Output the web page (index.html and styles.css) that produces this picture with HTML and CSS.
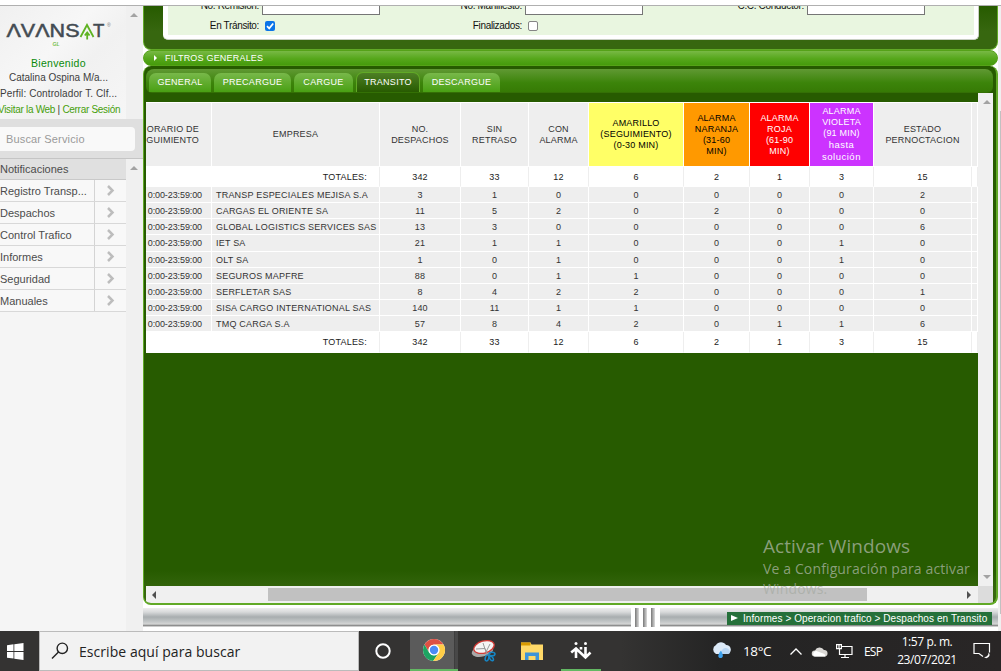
FILE: index.html
```html
<!DOCTYPE html>
<html lang="es">
<head>
<meta charset="utf-8">
<title>Avansat GL - Despachos en Transito</title>
<link rel="stylesheet" href="styles.css">
</head>
<body>
<div class="screen">
  <div class="topline"></div>
  <div class="app">
    <aside class="sidebar">
      <div class="profile">
        <div class="profile-body">
          <svg class="logo" width="126" height="40" viewBox="0 0 126 40">
            <g fill="#434b52" font-family="Liberation Sans, sans-serif" font-size="18.500" stroke="#434b52" stroke-width=".5">
              <text x="6.500" y="26.500" textLength="73" lengthAdjust="spacingAndGlyphs">ΛVΛNS</text>
              <text x="93" y="26.500">T</text>
            </g>
            <path d="M80.500 26.500L87 14.500l6.500 12M87.200 21.500v7.500M84.800 25l2.400-3 2.400 3" fill="none" stroke="#5fb322" stroke-width="1.800"/>
            <text x="107" y="16" font-size="5" fill="#777" font-family="Liberation Sans, sans-serif">®</text>
            <text x="52.500" y="35" font-size="5" font-weight="bold" font-style="italic" fill="#77c04a" font-family="Liberation Sans, sans-serif">GL</text>
          </svg>
          <p class="welcome">Bienvenido</p>
          <p class="person">Catalina Ospina M/a...</p>
          <p class="role">Perfil: Controlador T. Clf...</p>
          <p class="links"><a>Visitar la Web</a> | <a>Cerrar Sesión</a></p>
        </div>
        <div class="side-scroll"><i class="tri up"></i></div>
      </div>
      <div class="search"><div class="search-box">Buscar Servicio</div></div>
      <div class="menu-area">
        <ul class="menu">
          <li class="current"><span>Notificaciones</span></li>
          <li><span>Registro Transp...</span><b><svg width="9" height="11" viewBox="0 0 9 11"><path d="M2 1l4.500 4.500L2 10"/></svg></b></li>
          <li><span>Despachos</span><b><svg width="9" height="11" viewBox="0 0 9 11"><path d="M2 1l4.500 4.500L2 10"/></svg></b></li>
          <li><span>Control Trafico</span><b><svg width="9" height="11" viewBox="0 0 9 11"><path d="M2 1l4.500 4.500L2 10"/></svg></b></li>
          <li><span>Informes</span><b><svg width="9" height="11" viewBox="0 0 9 11"><path d="M2 1l4.500 4.500L2 10"/></svg></b></li>
          <li><span>Seguridad</span><b><svg width="9" height="11" viewBox="0 0 9 11"><path d="M2 1l4.500 4.500L2 10"/></svg></b></li>
          <li><span>Manuales</span><b><svg width="9" height="11" viewBox="0 0 9 11"><path d="M2 1l4.500 4.500L2 10"/></svg></b></li>
        </ul>
        <div class="side-scroll menu-scroll"><i class="tri up"></i></div>
      </div>
    </aside>

    <main class="main">
      <section class="filters">
        <div class="filters-card">
          <div class="filters-fill">
            <div class="frow frow-1">
              <label>No. Remisión:</label><span class="field"></span>
              <label>No. Manifiesto:</label><span class="field"></span>
              <label>C.C. Conductor:</label><span class="field"></span>
            </div>
            <div class="frow frow-2">
              <label>En Tránsito:</label><span class="check on"><svg width="10" height="10" viewBox="0 0 10 10"><path d="M2 5.200l2.200 2.200L8.200 2.500" fill="none" stroke="#fff" stroke-width="1.700"/></svg></span>
              <label>Finalizados:</label><span class="check"></span>
            </div>
          </div>
        </div>
      </section>
      <div class="general-bar"><i class="tri right"></i>FILTROS GENERALES</div>
      <section class="panel">
        <nav class="tabs">
          <a class="t1">GENERAL</a><a class="t2">PRECARGUE</a><a class="t3">CARGUE</a><a class="t4 active">TRANSITO</a><a class="t5">DESCARGUE</a>
        </nav>
        <div class="viewport">
          <div class="sheet">
            <table class="report">
              <colgroup><col class="c0"><col class="c1"><col class="c2"><col class="c3"><col class="c4"><col class="c5"><col class="c6"><col class="c7"><col class="c8"><col class="c9"><col class="c10"></colgroup>
              <thead>
                <tr><th>ORARIO DE<br>GUIMIENTO</th><th>EMPRESA</th><th>NO.<br>DESPACHOS</th><th>SIN<br>RETRASO</th><th>CON<br>ALARMA</th><th class="yellow">AMARILLO<br>(SEGUIMIENTO)<br>(0-30 MIN)</th><th class="orange">ALARMA<br>NARANJA<br>(31-60<br>MIN)</th><th class="red">ALARMA<br>ROJA<br>(61-90<br>MIN)</th><th class="violet">ALARMA<br>VIOLETA<br>(91 MIN)<br><span class="lower">hasta<br>solución</span></th><th>ESTADO<br>PERNOCTACION</th><th></th></tr>
              </thead>
              <tbody>
                <tr class="total"><td colspan="2">TOTALES:</td><td>342</td><td>33</td><td>12</td><td>6</td><td>2</td><td>1</td><td>3</td><td>15</td><td></td></tr>
                <tr><td>0:00-23:59:00</td><td>TRANSP ESPECIALES MEJISA S.A</td><td>3</td><td>1</td><td>0</td><td>0</td><td>0</td><td>0</td><td>0</td><td>2</td><td></td></tr>
                <tr><td>0:00-23:59:00</td><td>CARGAS EL ORIENTE SA</td><td>11</td><td>5</td><td>2</td><td>0</td><td>2</td><td>0</td><td>0</td><td>0</td><td></td></tr>
                <tr><td>0:00-23:59:00</td><td>GLOBAL LOGISTICS SERVICES SAS</td><td>13</td><td>3</td><td>0</td><td>0</td><td>0</td><td>0</td><td>0</td><td>6</td><td></td></tr>
                <tr class="tall"><td>0:00-23:59:00</td><td>IET SA</td><td>21</td><td>1</td><td>1</td><td>0</td><td>0</td><td>0</td><td>1</td><td>0</td><td></td></tr>
                <tr><td>0:00-23:59:00</td><td>OLT SA</td><td>1</td><td>0</td><td>1</td><td>0</td><td>0</td><td>0</td><td>1</td><td>0</td><td></td></tr>
                <tr><td>0:00-23:59:00</td><td>SEGUROS MAPFRE</td><td>88</td><td>0</td><td>1</td><td>1</td><td>0</td><td>0</td><td>0</td><td>0</td><td></td></tr>
                <tr><td>0:00-23:59:00</td><td>SERFLETAR SAS</td><td>8</td><td>4</td><td>2</td><td>2</td><td>0</td><td>0</td><td>0</td><td>1</td><td></td></tr>
                <tr><td>0:00-23:59:00</td><td>SISA CARGO INTERNATIONAL SAS</td><td>140</td><td>11</td><td>1</td><td>1</td><td>0</td><td>0</td><td>0</td><td>0</td><td></td></tr>
                <tr><td>0:00-23:59:00</td><td>TMQ CARGA S.A</td><td>57</td><td>8</td><td>4</td><td>2</td><td>0</td><td>1</td><td>1</td><td>6</td><td></td></tr>
                <tr class="total last"><td colspan="2">TOTALES:</td><td>342</td><td>33</td><td>12</td><td>6</td><td>2</td><td>1</td><td>3</td><td>15</td><td></td></tr>
              </tbody>
            </table>
          </div>
          <div class="vscroll"><i class="tri up"></i><i class="tri down"></i></div>
          <div class="hscroll"><i class="tri left"></i><span class="thumb"></span><i class="tri right"></i></div>
          <div class="corner"></div>
        </div>
      </section>
      <footer class="metal">
        <span class="slots"><i></i><i></i><i></i></span>
        <div class="crumb"><i class="tri right"></i>Informes &gt; Operacion trafico &gt; Despachos en Transito</div>
      </footer>
    </main>
    <div class="page-scroll"><i></i></div>
  </div>

  <div class="taskbar">
    <div class="start"><svg width="17" height="17" viewBox="0 0 17 17" fill="#fff"><path d="M0 2.300L6.500 1.300V8H0zM7.300 1.200L16.500 0V8H7.300zM0 8.900h6.500v6.700L0 14.700zM7.300 8.900h9.200V17l-9.200-1.300z"/></svg></div>
    <div class="finder"><svg width="18" height="18" viewBox="0 0 18 18" fill="none" stroke="#222" stroke-width="1.400"><circle cx="11.300" cy="6.300" r="5.200"/><path d="M7.500 10L1 16.500"/></svg><span>Escribe aquí para buscar</span></div>
    <div class="slot s1"><svg width="18" height="18" viewBox="0 0 18 18"><circle cx="9" cy="9" r="6.700" fill="none" stroke="#fff" stroke-width="2"/></svg></div>
    <div class="slot s2"><svg width="24" height="24" viewBox="0 0 24 24"><circle cx="12" cy="12" r="11" fill="#fff"/><path d="M2.500 6.500A11 11 0 0 1 21.500 6.500H12A5.500 5.500 0 0 0 7.200 14.800z" fill="#dd5144"/><path d="M2.500 6.500A11 11 0 0 0 11.200 23L16.800 14.700A5.500 5.500 0 0 1 7.200 14.800z" fill="#1da462"/><path d="M21.500 6.500A11 11 0 0 1 11.200 23L16.800 14.700A5.500 5.500 0 0 0 12 6.500z" fill="#ffcd46"/><circle cx="12" cy="12" r="5.300" fill="#fff"/><circle cx="12" cy="12" r="4.200" fill="#4c8bf5"/></svg></div>
    <div class="slot s3"><svg width="26" height="24" viewBox="0 0 26 24"><ellipse cx="11.500" cy="12" rx="11" ry="5.500" fill="#a9a9a9" transform="rotate(-14 11.500 12)"/><ellipse cx="13" cy="8" rx="10.500" ry="6" fill="#f4f4f4" stroke="#d23a35" stroke-width="1.300" transform="rotate(-16 13 8)"/><path d="M5 10l9-.5 2 5M12 4l3 9M19 5l-4 8" stroke="#999" fill="none"/><g fill="none" stroke="#1686c5" stroke-width="1.500"><ellipse cx="21" cy="15" rx="3" ry="1.800"/><ellipse cx="16" cy="19" rx="1.700" ry="3" transform="rotate(15 16 19)"/><ellipse cx="20.500" cy="19.500" rx="1.500" ry="2.500" transform="rotate(-35 20.500 19.500)"/></g></svg></div>
    <div class="slot s4"><svg width="22" height="19" viewBox="0 0 22 19"><path d="M0 .5h9.500l1 2H22V18H0z" fill="#ffd968"/><path d="M0 .5h9.500v3H0z" fill="#d99a00"/><path d="M4 18v-7.500h14V18h-3.500v-4h-7v4z" fill="#3d94d8"/></svg></div>
    <div class="slot s5"><svg width="22" height="19" viewBox="0 0 22 19" fill="none" stroke="#fff" stroke-width="2.600"><path d="M1.200 11.500L6 7.500l9.500 9 5-5M6 8v9M15.500 6v10M11 8.500V6"/><circle cx="6" cy="2.500" r="1.500" fill="#fff" stroke="none"/><circle cx="15.500" cy="2.500" r="1.500" fill="#fff" stroke="none"/></svg></div>
    <div class="tray">
      <svg width="22" height="20" viewBox="0 0 22 20"><path d="M5 13a5 5 0 0 1 0-9 6 6 0 0 1 10 0 4.700 4.700 0 0 1 2 9z" fill="#dceaf8"/><path d="M11 13a4 4 0 0 1 3-6 4.500 4.500 0 0 1 5 4 2 2 0 0 1-2 2z" fill="#b9d6f3"/><path d="M10 9.500c-4 5-3 7.500-.5 7.500s3.500-2 .5-7.500z" fill="#3ca0ed"/></svg>
      <span class="temp">18°C</span>
      <svg class="chev" width="14" height="9" viewBox="0 0 14 9"><path d="M1.500 7.500L7 2l5.500 5.500" fill="none" stroke="#fff" stroke-width="1.300"/></svg>
      <svg class="cloud" width="18" height="12" viewBox="0 0 18 12"><path d="M3.500 11.500a3 3 0 0 1 .5-6 5 5 0 0 1 9-.5 3.300 3.300 0 0 1 1 6.500z" fill="#dad8d5"/><path d="M3.500 11.500a3 3 0 0 1 2-5.500l8 3 1 2.500z" fill="#fff"/></svg>
      <svg class="net" width="17" height="15" viewBox="0 0 17 15" fill="none" stroke="#fff" stroke-width="1.200"><path d="M6 2.500h10v8H3.500V5M9 10.500V13M5 13.500h8M.6.600h4.800v4H.6zM3 1v3"/></svg>
      <span class="lang">ESP</span>
      <div class="clock"><span>1:57 p. m.</span><span class="date">23/07/2021</span></div>
      <svg class="note" width="18" height="18" viewBox="0 0 18 18" fill="none" stroke="#fff" stroke-width="1.200"><path d="M10 14.500L6 11.500H1V1.500h15.500v9"/><path d="M15.500 10.500a3 3 0 1 1-4.500 4.500 4 4 0 0 0 4.500-4.500z" fill="#fff" stroke="none"/></svg>
    </div>
  </div>
  <div class="watermark"><p class="wm-title">Activar Windows</p><p>Ve a Configuración para activar</p><p class="wm-last">Windows.</p></div>
</div>
</body>
</html>
```
FILE: styles.css
```css
* { box-sizing: border-box; }
body { margin: 0; font-family: "Liberation Sans", Arial, sans-serif; background: #fff; }
p, ul { margin: 0; padding: 0; }
svg { display: block; flex: none; }
.screen { position: relative; width: 1001px; height: 671px; overflow: hidden; display: flex; flex-direction: column; }
.topline { height: 6px; flex: none; border-bottom: 1px solid #b0b0b0; background: #fff; }
.app { display: flex; height: 625px; flex: none; overflow: hidden; }

.tri { display: block; width: 0; height: 0; border: 4px solid transparent; flex: none; }
.tri.up { border-top: 0; border-bottom-color: #a3a3a3; }
.tri.down { border-bottom: 0; border-top-color: #a3a3a3; }
.tri.left { border-left: 0; border-right-color: #505050; }
.tri.right { border-right: 0; border-left-color: #505050; }

/* Sidebar */
.sidebar { width: 143px; flex: none; display: flex; flex-direction: column; background: #f5f5f5; }
.profile { display: flex; height: 113px; }
.profile-body { width: 126px; height: 113px; overflow: hidden; white-space: nowrap; font-size: 10px; color: #3d3d3d; background: linear-gradient(135deg, #f0f0f0, #f7f7f7 40%, #f1f1f1 60%, #f6f6f6); }
.logo { height: 49px; }
.profile-body p { height: 16px; line-height: 16px; }
.profile-body .welcome { color: #0a8a0a; padding-left: 31px; letter-spacing: .28px; font-size: 10.500px; }
.profile-body .person { padding-left: 9px; letter-spacing: 0; margin-top: -1px; }
.profile-body .role { letter-spacing: .1px; }
.profile-body .links { margin-left: -2px; letter-spacing: -.3px; }
.links a { color: #479f0c; }
.side-scroll { width: 17px; background: #f0f0f0; padding: 7px 4px; }
.search { height: 40px; background: #dfdfdf; border-bottom: 1px solid #c5c5c5; padding: 8px 0; }
.search-box { width: 135px; height: 24px; border-radius: 0 4px 4px 0; background: #f9f9f9; color: #999; font-size: 11px; letter-spacing: .15px; line-height: 24px; padding-left: 6px; }
.menu-area { display: flex; flex: 1; }
.menu { width: 126px; list-style: none; font-size: 11px; color: #4c4c4c; }
.menu li { height: 22px; display: flex; border-bottom: 1px solid #d8d8d8; line-height: 22px; background: #f8f8f8; }
.menu li.current { height: 21px; background: #e0e0e0; border-color: #c9c9c9; line-height: 21px; }
.menu li span { width: 94px; }
.menu li b { width: 32px; border-left: 1px solid #d4d4d4; padding: 5px 0 0 11px; }
.menu svg path { fill: none; stroke: #bdbdbd; stroke-width: 2.500; }

/* Main column */
.main { width: 855px; flex: none; display: flex; flex-direction: column; }
.filters { height: 44px; background: linear-gradient(#275b00, #37670f 60%); border: solid #61a926; border-width: 0 1px 1px; border-radius: 0 0 8px 8px; padding: 0 18px 0 19px; }
.filters-card { height: 34px; background: #fff; border-radius: 0 0 5px 5px; border-bottom: 1px solid #c8cfc2; border-right: 1px solid #c8cfc2; padding: 0 4px 4px 5px; overflow: hidden; }
.filters-fill { height: 29px; background: #e9f6e0; color: #111; font-size: 10px; }
.frow { display: grid; grid-template-columns: 91px 172px 91px 191px 91px 1fr; }
.frow label { text-align: right; white-space: nowrap; letter-spacing: -.35px; }
.frow-1 { height: 9px; overflow: hidden; }
.frow-1 label { line-height: 12px; margin-top: -6px; }
.field { width: 118px; height: 20px; margin: -11px 0 0 3px; background: #fff; border: 1px solid #767676; }
.frow-2 label { line-height: 20px; margin-top: 1px; }
.check { width: 10px; height: 10px; margin: 6px 0 0 6px; border: 1px solid #858585; border-radius: 2px; background: #fff; }
.check.on { background: #0b74e8; border: 0; }
.general-bar { height: 16px; display: flex; align-items: center; gap: 8px; padding-left: 10px; border: 1px solid #55a218; border-radius: 8px; background: linear-gradient(#78b945, #56a71b 55%, #459b0b); color: #fff; font-size: 9px; letter-spacing: .2px; }
.general-bar .tri { border-left-color: #fff; border-width: 3px; border-right-width: 0; }
.panel { height: 539px; padding: 3px 3px 3px 2px; background: linear-gradient(#275b00 94%, #37670f 98%); border: solid #61a926; border-width: 0 2px 2px 1px; border-radius: 8px; overflow: hidden; }
.tabs { height: 24px; border-radius: 8px 8px 6px 6px; background: linear-gradient(#609933, #3c840a 60%, #367a05); border-bottom: 1px solid #347005; display: flex; gap: 3px; padding: 4px 0 0 3px; }
.tabs a { height: 19px; line-height: 18px; border-radius: 7px 7px 0 0; background: linear-gradient(#78b84a, #49a013); color: #fff; font-size: 9px; letter-spacing: .3px; text-align: center; }
.tabs .t1 { width: 62px; } .tabs .t2 { width: 77px; } .tabs .t3 { width: 59px; } .tabs .t4 { width: 64px; } .tabs .t5 { width: 77px; }
.tabs .active { height: 20px; margin-top: -1px; line-height: 19px; background: linear-gradient(#4d7f25, #285b01); border: 1px solid #61a926; border-bottom: 0; }

.viewport { height: 510px; display: grid; grid-template: 493px 17px / 832px 17px; overflow: hidden; }
.sheet { padding-top: 9px; overflow: hidden; }
.report { width: 832px; border-collapse: separate; border-spacing: 0; table-layout: fixed; font-size: 9px; color: #333; letter-spacing: .2px; background: #fff; border-top: 1px solid #fff; }
.report .c0 { width: 66px; } .report .c1 { width: 168px; } .report .c2 { width: 81px; } .report .c3 { width: 68px; } .report .c4 { width: 60px; } .report .c5 { width: 95px; } .report .c6 { width: 66px; } .report .c7 { width: 60px; } .report .c8 { width: 64px; } .report .c9 { width: 98px; } .report .c10 { width: 6px; }
.report th { height: 64px; padding: 0; font-weight: normal; line-height: 11px; letter-spacing: .2px; background: #eee; border-right: 1px solid #fff; border-bottom: 1px solid #fff; white-space: nowrap; }
.report th:first-child { padding-right: 12px; text-align: right; }
.report td { height: 16px; padding: 0; line-height: 14px; text-align: center; background: #eee; border-right: 1px solid #fff; border-bottom: 1px solid #fff; white-space: nowrap; }
.report .tall td { height: 17px; }
.report td:first-child { text-align: right; padding-right: 9px; letter-spacing: -.1px; }
.report td:nth-child(2) { text-align: left; padding-left: 4px; }
.report .total td { height: 20px; background: #fff; border-right-color: #eee; text-align: center; padding-left: 0; color: #222; }
.report .last td { height: 21px; }
.report .total td:first-child { text-align: right; padding-right: 12px; letter-spacing: .2px; }
.report .yellow { background: #ff6; color: #000; }
.report .orange { background: #f90; color: #000; }
.report .red { background: #f00; color: #fff; }
.report .violet { background: #c3f; color: #fff; }
.lower { font-size: 9.500px; letter-spacing: .5px; }
.vscroll { background: #f0f0f0; display: flex; flex-direction: column; justify-content: space-between; align-items: center; padding: 7px 0; }
.hscroll { background: #f0f0f0; display: flex; align-items: center; padding: 0 7px 0 6px; }
.hscroll .thumb { width: 599px; height: 13px; background: #c1c1c1; margin: 0 auto 0 112px; }
.corner { background: #dcdcdc; }

.metal { height: 20px; margin-top: 3px; display: flex; align-items: center; background: linear-gradient(#eee, #d8dadb 20%, #a8adaf 45%, #bfc3c4 65%, #d4d5d5 80%, #777 90%, #fff 94%); }
.slots { display: flex; gap: 4px; width: 29px; height: 20px; margin-left: 488px; padding: 0 4px; background: #fff; }
.slots i { width: 4px; height: 19px; background: linear-gradient(90deg, #777, #ddd); }
.crumb { width: 265px; height: 13px; margin-left: 67px; display: flex; align-items: center; gap: 5px; padding-left: 4px; background: #25703a; color: #fff; font-size: 10px; letter-spacing: .08px; white-space: nowrap; }
.crumb .tri { border-left: 7px solid #fff; border-top-width: 3px; border-bottom-width: 3px; }
.page-scroll { width: 3px; background: #f0f0f0; padding: 105px 0 0 2px; }
.page-scroll i { display: block; width: 1px; height: 503px; background: #c1c1c1; }

/* Taskbar */
.taskbar { height: 40px; display: flex; flex: none; background: linear-gradient(90deg, #343332, #343332 62%, #242424 72%, #292626); color: #fff; font-family: "Open Sans", "Noto Sans", sans-serif; }
.start { width: 39px; padding: 12px 0 0 7px; }
.finder { width: 320px; display: flex; align-items: center; gap: 10px; padding-left: 11px; background: #f2f2f2; border: 1px solid #bbb; color: #222; font-size: 14px; letter-spacing: .05px; }
.slot { height: 40px; display: flex; align-items: center; justify-content: center; }
.s1 { width: 51px; padding-right: 3px; }
.s2 { width: 48px; background: linear-gradient(90deg, #5b5b5b 44px, #333 44px, #484848 45px); border-bottom: 2px solid #63b863; }
.s3 { width: 51px; }
.s4 { width: 46px; }
.s5 { border-bottom: 2px solid #63b863; width: 40px; margin-left: 6px; }
.tray { display: flex; align-items: center; margin-left: 110px; font-size: 12px; white-space: nowrap; }
.temp { width: 30px; margin-left: 10px; font-size: 13.500px; letter-spacing: -.4px; }
.chev { margin-left: 16px; }
.cloud { margin-left: 8px; }
.net { margin-left: 7px; }
.lang { width: 19px; margin-left: 11px; font-size: 12px; letter-spacing: -.8px; }
.clock { width: 60px; margin-left: 14px; display: flex; flex-direction: column; text-align: center; font-size: 12px; line-height: 18px; letter-spacing: -.4px; }
.note { margin-left: 16px; }

.watermark { position: absolute; left: 763px; top: 534px; color: rgba(178, 186, 172, .72); font-family: "Open Sans", "Noto Sans", sans-serif; font-size: 14px; letter-spacing: .13px; line-height: 21px; white-space: nowrap; }
.watermark .wm-title { font-size: 19px; line-height: 24px; letter-spacing: .05px; }
.watermark .wm-last { line-height: 20px; color: rgba(165, 170, 162, .7); }
```
